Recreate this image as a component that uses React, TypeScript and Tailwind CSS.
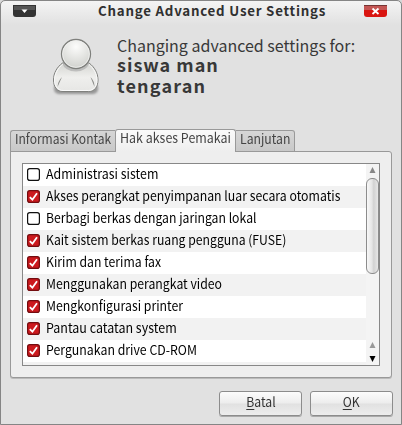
import React from "react";

const rows = [
  { label: "Administrasi sistem", on: false, scale: "scale-x-[.933]" },
  { label: "Akses perangkat penyimpanan luar secara otomatis", on: true, scale: "scale-x-[.924]" },
  { label: "Berbagi berkas dengan jaringan lokal", on: false, scale: "scale-x-[.918]" },
  { label: "Kait sistem berkas ruang pengguna (FUSE)", on: true, scale: "scale-x-[.918]" },
  { label: "Kirim dan terima fax", on: true, scale: "scale-x-[.92]" },
  { label: "Menggunakan perangkat video", on: true, scale: "scale-x-[.922]" },
  { label: "Mengkonfigurasi printer", on: true, scale: "scale-x-[.925]" },
  { label: "Pantau catatan system", on: true, scale: "scale-x-[.938]" },
  { label: "Pergunakan drive CD-ROM", on: true, scale: "scale-x-[.926]" },
];

function Check({ on }: { on: boolean }) {
  return (
    <svg width="13" height="13" viewBox="0 0 13 13" className="mt-1 shrink-0">
      <rect x=".6" y=".6" width="11.8" height="11.8" rx="2.2" fill={on ? "#cc1a1e" : "#fff"} stroke={on ? "#730d10" : "#111"} strokeWidth="1.2" />
      {on && <path d="M2.800 7.200 5.400 9.700 10 3.200" fill="none" stroke="#fff" strokeWidth="1.8" />}
    </svg>
  );
}

function Person() {
  return (
    <svg width="50" height="60" viewBox="0 0 50 60" className="shrink-0">
      <defs>
        <radialGradient id="head" cx=".5" cy=".25" r=".75">
          <stop offset="0" stopColor="#fcfcfb" />
          <stop offset="1" stopColor="#d0d1cd" />
        </radialGradient>
        <linearGradient id="body" x1="0" y1="0" x2="0" y2="1">
          <stop offset="0" stopColor="#d4d5d1" />
          <stop offset=".5" stopColor="#efefed" />
          <stop offset="1" stopColor="#e6e6e4" />
        </linearGradient>
        <filter id="soft" x="-20%" y="-50%" width="140%" height="200%">
          <feGaussianBlur stdDeviation="1.3" />
        </filter>
      </defs>
      <rect x="3" y="46" width="44" height="11" rx="5" fill="#777" opacity=".7" filter="url(#soft)" />
      <path d="M11.500 26C6 30 2.500 36 2.500 43C2.500 50 6 54.500 12 54.500H37.500C43.500 54.500 47 50 47 43C47 36 43.500 30 38 26Z" fill="url(#body)" stroke="#7f807d" />
      <path d="M12 27C7 31 3.500 37 3.500 43C3.500 49 7 53.500 12 53.500H37.500C42.500 53.500 46 49 46 43C46 37 42.500 31 37.500 27" fill="none" stroke="#fafafa" />
      <path d="M11 40Q7 44 6.500 50ZM39.500 40Q43.500 44 43.500 50Z" fill="#8b8c89" />
      <path d="M11 26Q14 34.500 25 34.500Q35 34.500 38.500 26Z" fill="#aaa" opacity=".65" />
      <circle cx="25" cy="17" r="14.500" fill="url(#head)" stroke="#7f807d" strokeWidth="1.3" />
      <circle cx="25" cy="17" r="13.400" fill="none" stroke="#f1f1f0" strokeWidth=".8" />
    </svg>
  );
}

export default function App() {
  return (
    <div className="h-[425px] w-[402px] overflow-hidden bg-[#d8d8d8] font-['Noto_Sans_CJK_SC','Open_Sans',sans-serif]">
      <div className="flex h-[425px] w-[402px] flex-col rounded-t-[5px] border border-[#858585] bg-[linear-gradient(#f4f4f4_0px,#e1e1e1_24px)]">
        <header className="flex h-[22px] items-start pt-1 pl-3 pr-[11px]">
          <svg width="23" height="12" viewBox="0 0 23 12" className="shrink-0">
            <path d="M0 0H23V9Q23 12 20 12H3Q0 12 0 9Z" fill="#333" />
            <path d="M1 1H22V5H1Z" fill="#555" />
            <path d="M8.500 4.500H14.500L11.500 8Z" fill="#fff" />
          </svg>
          <h1 className="ml-[62px] mt-[-4px] h-5 w-[266px] whitespace-nowrap text-[13.300px] font-bold leading-[19px] tracking-[0.78px] text-[#303030]">Change Advanced User Settings</h1>
          <svg width="23" height="12" viewBox="0 0 23 12" className="shrink-0">
            <path d="M0 0H23V9Q23 12 20 12H3Q0 12 0 9Z" fill="#d91510" />
            <path d="M0 0H23V5H0Z" fill="#c45654" />
            <path d="M0 .5H23" stroke="#753534" />
            <path d="M8.500 3.500 14.500 9M14.500 3.500 8.500 9" stroke="#fff" strokeWidth="1.8" />
          </svg>
        </header>
        <section className="flex h-[106px] pl-[50px] pt-[14px] text-[#383838]">
          <Person />
          <div className="-mt-0.5 ml-4 whitespace-nowrap">
            <p className="h-[19px] text-base leading-5">Changing advanced settings for:</p>
            <p className="h-[21px] text-lg font-bold leading-5 tracking-[1px]">siswa man</p>
            <p className="h-5 text-lg font-bold leading-5 tracking-[1.2px]">tengaran</p>
          </div>
        </section>
        <nav className="relative z-10 ml-[9px] flex h-[23px] items-end whitespace-nowrap text-[13.300px] text-[#444]">
          <div className="h-[22px] w-[105px] rounded-tl-[3px] border border-r-0 border-[#999] bg-[linear-gradient(#d6d6d6,#c8c8c8)] pl-1 leading-[15px]">
            <span className="inline-block origin-left scale-x-[.905]">Informasi Kontak</span>
          </div>
          <div className="h-[23px] w-[121px] rounded-t-[3px] border border-b-0 border-[#999] bg-[linear-gradient(#fafafa,#eee)] pl-1 leading-[15px]">
            <span className="inline-block origin-left scale-x-[.935]">Hak akses Pemakai</span>
          </div>
          <div className="h-[22px] w-[59px] rounded-tr-[3px] border border-l-0 border-[#999] bg-[linear-gradient(#d6d6d6,#c8c8c8)] pl-1 leading-[15px]">
            <span className="inline-block origin-left scale-x-[.92]">Lanjutan</span>
          </div>
        </nav>
        <main className="mt-[-1px] ml-[9px] w-[382px] flex-none basis-[227px] rounded-[3px] rounded-tl-none border border-[#999] bg-[#eee] pt-[11px] pl-[11px] shadow-[0_1px_0_#bbb]">
          <div className="flex h-[203px] w-[358px] border border-[#888] bg-white">
            <ul className="w-[343px] overflow-hidden whitespace-nowrap text-[13.300px] leading-[19px] text-black">
              {rows.map((r) => (
                <li key={r.label} className="flex h-[22px] items-start pl-1 even:bg-[#f2f2f2]">
                  <Check on={r.on} />
                  <span className={`ml-1.5 origin-left ${r.scale}`}>{r.label}</span>
                </li>
              ))}
              <li className="h-[3px] bg-[#f2f2f2]" />
            </ul>
            <svg width="13" height="201" viewBox="0 0 13 201" className="shrink-0">
              <defs>
                <linearGradient id="thumb">
                  <stop offset="0" stopColor="#fafafa" />
                  <stop offset=".45" stopColor="#e5e5e5" />
                  <stop offset=".6" stopColor="#d2d2d2" />
                  <stop offset="1" stopColor="#e9e9e9" />
                </linearGradient>
              </defs>
              <path d="M0 0H13V201H0Z" fill="#f4f4f4" />
              <rect x=".5" y="14.500" width="12" height="95" rx="5.500" fill="url(#thumb)" stroke="#8c8c8c" />
              <path d="M3.500 9H9.500L6.500 3Z" fill="#888" />
              <path d="M3.500 184H9.500L6.500 178Z" fill="#999" />
              <path d="M3.500 192H9.500L6.500 198Z" fill="#000" />
            </svg>
          </div>
        </main>
        <footer className="flex justify-end gap-2 pr-2 pt-[13px] text-[13.300px] text-[#333]">
          {["Batal", "OK"].map((b) => (
            <button key={b} className="flex h-[25px] w-[83px] items-start justify-center rounded-[3px] border border-[#8c8c8c] bg-[linear-gradient(#fcfcfc_0%,#ededed_48%,#e1e1e1_52%,#ededed_100%)] leading-[19px] shadow-[0_1px_0_#aaa]">
              <span className="scale-x-[.92]"><u className="underline-offset-2">{b[0]}</u>{b.slice(1)}</span>
            </button>
          ))}
        </footer>
      </div>
    </div>
  );
}
